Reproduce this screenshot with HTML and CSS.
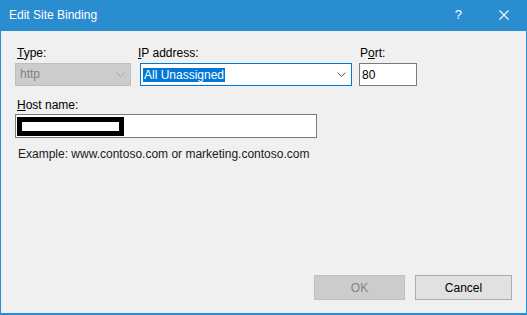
FILE: index.html
```html
<!DOCTYPE html>
<html lang="en">
    <head>
        <meta charset="utf-8">
        <link rel="stylesheet" href="styles.css">
    </head>
    <body>
        <div class="window">
            <div class="titlebar">
                <span class="title">Edit Site Binding</span>
                <span class="help">?</span>
                <svg class="close" width="10" height="10" viewBox="0 0 10 10">
                    <path d="M0.5 0.5L9.5 9.5M9.5 0.5L0.5 9.5" stroke="#fff" stroke-width="1.1" fill="none"/>
                </svg>
            </div>

            <div class="content">
                <div class="row">
                    <div class="field f-type">
                        <label><u>T</u>ype:</label>
                        <div class="combo disabled">
                            <span class="value">http</span>
                            <svg class="chev" width="9" height="5" viewBox="0 0 9 5"><path d="M0.5 0.5L4.5 4.5L8.5 0.5" stroke="#a6a6a6" fill="none"/></svg>
                        </div>
                    </div>
                    <div class="field f-ip">
                        <label><u>I</u>P address:</label>
                        <div class="combo focus">
                            <span class="value sel">All Unassigned</span>
                            <svg class="chev" width="9" height="5" viewBox="0 0 9 5"><path d="M0.5 0.5L4.5 4.5L8.5 0.5" stroke="#606060" fill="none"/></svg>
                        </div>
                    </div>
                    <div class="field f-port">
                        <label>P<u>o</u>rt:</label>
                        <div class="textbox"><span class="value">80</span></div>
                    </div>
                </div>

                <div class="field f-host">
                    <label><u>H</u>ost name:</label>
                    <div class="textbox wide"><span class="redact"></span></div>
                </div>

                <p class="hint">Example: www.contoso.com or marketing.contoso.com</p>

                <div class="actions">
                    <button class="btn ok" disabled>OK</button>
                    <button class="btn cancel">Cancel</button>
                </div>
            </div>
        </div>
    </body>
</html>
```

FILE: styles.css
```css
*{margin:0;padding:0;box-sizing:border-box;}
html,body{width:527px;height:315px;overflow:hidden;}
body{font-family:"Liberation Sans",Arial,sans-serif;font-size:12px;color:#000;background:#f0f0f0;}

.window{width:527px;height:315px;display:flex;flex-direction:column;
    border:1px solid #2a8dd0;border-top:0;border-bottom-width:2px;background:#f0f0f0;}

.titlebar{height:31px;background:#2a8dd0;color:#fff;display:flex;align-items:center;
    margin:0 -1px;padding-left:9px;}
.title{flex:1;font-size:12px;line-height:16px;margin-top:-1px;}
.help{font-size:13px;line-height:16px;margin-right:37px;margin-top:-2px;}
.close{margin-right:18px;margin-top:-1px;}

.content{flex:1;display:flex;flex-direction:column;padding:14px 0 13px 14px;}

.row{display:flex;align-items:flex-start;}
.field{display:flex;flex-direction:column;}
.field label{line-height:16px;margin-bottom:2px;}
.f-type{width:116px;margin-right:9px;}
.f-type label{padding-left:2px;}
.f-ip{width:212px;margin-right:7px;}
.f-ip label{margin-left:-2px;}
.f-port{width:58px;}
.f-port label{padding-left:1px;}
.f-host{margin-top:11px;width:302px;}
.f-host label{padding-left:2px;margin-bottom:1px;}

.combo,.textbox{height:23px;border:1px solid #7a7a7a;background:#fff;display:flex;align-items:center;}
.combo .value{flex:1;padding-left:2px;line-height:15px;}
.combo .chev{margin-right:5px;}
.combo.disabled{background:#cccccc;border-color:#bfbfbf;color:#838383;}
.combo.disabled .value{padding-left:4px;}
.combo.focus{border-color:#0078d7;}
.combo .sel{flex:0 0 auto;background:#0078d7;color:#fff;margin-left:2px;margin-right:auto;padding:0 1px;line-height:14px;}
.textbox .value{padding-left:2px;}
.textbox.wide{height:24px;padding:2px 0 1px 1px;align-items:stretch;}
.redact{width:107px;border:5px solid #000;background:#fff;}

.hint{margin-top:8px;padding-left:3px;line-height:16px;color:#1a1a1a;}

.actions{margin-top:auto;display:flex;justify-content:flex-end;gap:10px;padding-right:14px;}
.btn{height:25px;border:1px solid #adadad;background:#e1e1e1;font:inherit;color:#000;}
.btn.ok{width:91px;background:#cccccc;border-color:#bfbfbf;color:#838383;}
.btn.cancel{width:97px;}
```
